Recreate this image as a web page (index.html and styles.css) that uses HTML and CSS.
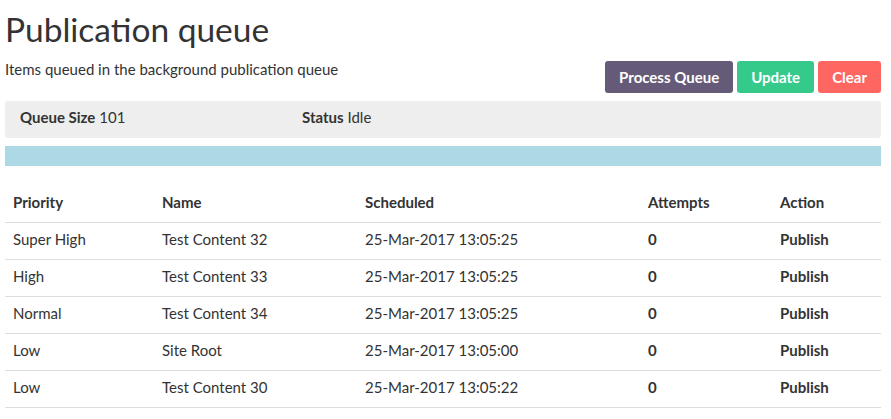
FILE: index.html
```html
<!DOCTYPE html>
<html>
<head>
<meta charset="utf-8">
<link rel="stylesheet" href="styles.css">
</head>
<body>
<div class="page">
  <h1 class="title">Publication queue</h1>
  <div class="intro">
    <p class="subtitle">Items queued in the background publication queue</p>
    <div class="actions">
      <button class="btn btn-process">Process Queue</button>
      <button class="btn btn-update">Update</button>
      <button class="btn btn-clear">Clear</button>
    </div>
  </div>
  <div class="summary">
    <div><strong>Queue Size</strong> 101</div>
    <div><strong>Status</strong> Idle</div>
    <div></div>
  </div>
  <div class="progress"></div>
  <table class="queue">
    <thead>
      <tr>
        <th class="c-priority">Priority</th>
        <th class="c-name">Name</th>
        <th class="c-scheduled">Scheduled</th>
        <th class="c-attempts">Attempts</th>
        <th class="c-action">Action</th>
      </tr>
    </thead>
    <tbody>
      <tr><td>Super High</td><td>Test Content 32</td><td>25-Mar-2017 13:05:25</td><td class="b">0</td><td class="b">Publish</td></tr>
      <tr><td>High</td><td>Test Content 33</td><td>25-Mar-2017 13:05:25</td><td class="b">0</td><td class="b">Publish</td></tr>
      <tr><td>Normal</td><td>Test Content 34</td><td>25-Mar-2017 13:05:25</td><td class="b">0</td><td class="b">Publish</td></tr>
      <tr><td>Low</td><td>Site Root</td><td>25-Mar-2017 13:05:00</td><td class="b">0</td><td class="b">Publish</td></tr>
      <tr><td>Low</td><td>Test Content 30</td><td>25-Mar-2017 13:05:22</td><td class="b">0</td><td class="b">Publish</td></tr>
    </tbody>
  </table>
</div>
</body>
</html>
```
FILE: styles.css
```css
* { box-sizing: border-box; }
html, body { margin: 0; padding: 0; background: #fff; }
body {
  font-family: Lato, "Open Sans", sans-serif;
  font-size: 15px;
  line-height: 20px;
  color: #333;
}
.page { padding: 0 10px 0 5px; }
.title {
  margin: 9px 0 0 0;
  font-size: 33.5px;
  font-weight: 400;
  line-height: 40px;
  color: #333;
}
.intro {
  display: flex;
  justify-content: space-between;
  align-items: flex-start;
  margin-top: 10px;
}
.subtitle { margin: 0; }
.actions { display: flex; gap: 4px; margin-top: 2px; }
.btn {
  font-family: inherit;
  font-size: 15px;
  font-weight: 700;
  line-height: 20px;
  color: #fff;
  border: 0;
  border-radius: 3px;
  padding: 6px 14px 6px;
  cursor: pointer;
}
.btn-process { background: #655b78; }
.btn-update { background: #35c98a; }
.btn-clear { background: #fe6661; }
.summary {
  display: grid;
  grid-template-columns: 1fr 1fr 1fr;
  background: #eeeeee;
  border-radius: 3px;
  padding: 6px 15px 11px;
  margin-top: 8px;
}
.summary strong { font-weight: 700; }
.progress {
  height: 20px;
  background: #add8e6;
  margin-top: 8px;
}
.queue {
  width: 100%;
  border-collapse: collapse;
  margin-top: 20px;
}
.queue th, .queue td {
  text-align: left;
  padding: 6px 8px 10px;
  vertical-align: top;
}
.queue th { font-weight: 700; border-bottom: 1px solid #ddd; }
.queue td { border-bottom: 1px solid #ddd; }
.queue td.b { font-weight: 700; }
.c-priority { width: 149px; }
.c-name { width: 203px; }
.c-scheduled { width: 283px; }
.c-attempts { width: 132px; }
.c-action { width: 109px; }
```
